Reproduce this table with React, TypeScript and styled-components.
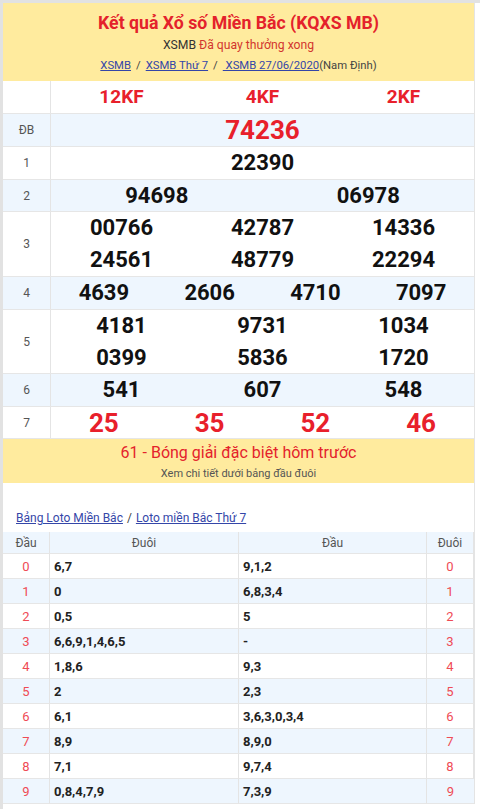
import React from "react";
import styled, { createGlobalStyle } from "styled-components";

const Global = createGlobalStyle`
  html, body { margin: 0; padding: 0; background: #fff; }
  body { font-family: Roboto, "Liberation Sans", Arial, sans-serif; color: #222; }
`;

const Frame = styled.div`
  width: 480px;
  box-sizing: border-box;
  border-top: 3px solid #e2e2e2;
  border-left: 3px solid #e2e2e2;
  padding-right: 5px;
  min-height: 809px;
`;

const Box = styled.div`
  border-right: 1px solid #e4e4e4;
  background: #fff;
`;

const Header = styled.div`
  background: #ffeb9e;
  height: 78px;
  display: flex;
  flex-direction: column;
  align-items: center;
  padding-top: 9px;
  box-sizing: border-box;
`;

const Title = styled.h1`
  margin: 0;
  font-size: 17.7px;
  line-height: 22px;
  font-weight: 700;
  color: #e4222b;
`;

const Sub = styled.div`
  margin-top: 2px;
  font-size: 12.2px;
  line-height: 18px;
  color: #333;
  span { color: #d2362e; }
`;

const Crumbs = styled.div`
  margin-top: 3px;
  font-size: 11.3px;
  line-height: 18px;
  color: #444;
  display: flex;
  gap: 5px;
  white-space: pre;
`;

const Link = styled.a`
  color: #3446a8;
  text-decoration: underline;
`;

const Row = styled.div<{ $alt?: boolean; $h: number }>`
  display: flex;
  height: ${(p) => p.$h}px;
  background: ${(p) => (p.$alt ? "#eef6fe" : "#fff")};
  border-bottom: 1px solid #e6e6e6;
  box-sizing: border-box;
`;

const Label = styled.div`
  width: 47px;
  flex: none;
  border-right: 1px solid #e4e4e4;
  display: flex;
  align-items: center;
  justify-content: center;
  font-size: 12px;
  color: #555;
`;

const Cells = styled.div<{ $cols: number }>`
  flex: 1;
  display: grid;
  grid-template-columns: repeat(${(p) => p.$cols}, 1fr);
  align-content: center;
`;

const Num = styled.div<{ $red?: boolean; $size?: number }>`
  text-align: center;
  font-weight: 700;
  font-size: ${(p) => p.$size ?? 22}px;
  line-height: 32px;
  color: ${(p) => (p.$red ? "#e8202b" : "#111")};
`;

const Footer = styled.div`
  background: #ffeb9e;
  height: 44px;
  display: flex;
  flex-direction: column;
  align-items: center;
  padding-top: 3px;
  box-sizing: border-box;
`;

const FootTitle = styled.div`
  font-size: 16px;
  line-height: 22px;
  color: #e4222b;
`;

const FootSub = styled.div`
  margin-top: 3px;
  font-size: 11px;
  line-height: 14px;
  color: #555;
`;

const LotoLinks = styled.div`
  padding: 25px 0 0 13px;
  height: 49px;
  box-sizing: border-box;
  font-size: 12px;
  line-height: 20px;
  color: #444;
  display: flex;
  gap: 4px;
`;

const LotoTable = styled.div`
  display: grid;
  grid-template-columns: 47px 189px 188px 1fr;
`;

const LCell = styled.div<{ $alt?: boolean; $head?: boolean; $kind: "num" | "val" }>`
  height: ${(p) => (p.$head ? 22 : 25)}px;
  box-sizing: border-box;
  background: ${(p) => (p.$alt ? "#eef6fe" : "#fff")};
  border-bottom: 1px solid #e6e6e6;
  border-right: 1px solid #e4e4e4;
  display: flex;
  align-items: center;
  justify-content: ${(p) => (p.$kind === "num" || p.$head ? "center" : "flex-start")};
  padding-left: ${(p) => (p.$kind === "val" && !p.$head ? "4px" : "0")};
  font-size: ${(p) => (p.$head ? 12 : 13)}px;
  font-weight: ${(p) => (p.$kind === "val" && !p.$head ? 700 : 400)};
  color: ${(p) => (p.$head ? "#555" : p.$kind === "num" ? "#ef4b55" : "#222")};
  &:last-child { border-right: none; }
`;

const results: { label: string; cols: number; nums: string[]; red?: boolean; size?: number; h: number }[] = [
  { label: "", cols: 3, nums: ["12KF", "4KF", "2KF"], red: true, size: 19, h: 33 },
  { label: "ĐB", cols: 1, nums: ["74236"], red: true, size: 26, h: 33 },
  { label: "1", cols: 1, nums: ["22390"], h: 33 },
  { label: "2", cols: 2, nums: ["94698", "06978"], h: 32 },
  { label: "3", cols: 3, nums: ["00766", "42787", "14336", "24561", "48779", "22294"], h: 65 },
  { label: "4", cols: 4, nums: ["4639", "2606", "4710", "7097"], h: 33 },
  { label: "5", cols: 3, nums: ["4181", "9731", "1034", "0399", "5836", "1720"], h: 64 },
  { label: "6", cols: 3, nums: ["541", "607", "548"], h: 33 },
  { label: "7", cols: 4, nums: ["25", "35", "52", "46"], red: true, size: 26, h: 32 },
];

const loto: [string, string][] = [
  ["6,7", "9,1,2"],
  ["0", "6,8,3,4"],
  ["0,5", "5"],
  ["6,6,9,1,4,6,5", "-"],
  ["1,8,6", "9,3"],
  ["2", "2,3"],
  ["6,1", "3,6,3,0,3,4"],
  ["8,9", "8,9,0"],
  ["7,1", "9,7,4"],
  ["0,8,4,7,9", "7,3,9"],
];

export default function App() {
  return (
    <>
      <Global />
      <Frame>
        <Box>
          <Header>
            <Title>Kết quả Xổ số Miền Bắc (KQXS MB)</Title>
            <Sub>
              XSMB <span>Đã quay thưởng xong</span>
            </Sub>
            <Crumbs>
              <Link>XSMB</Link>/<Link>XSMB Thứ 7</Link>/
              <span>
                <Link> XSMB 27/06/2020</Link>(Nam Định)
              </span>
            </Crumbs>
          </Header>
          {results.map((r, i) => (
            <Row key={i} $alt={i % 2 === 1} $h={r.h}>
              <Label>{r.label}</Label>
              <Cells $cols={r.cols}>
                {r.nums.map((n, j) => (
                  <Num key={j} $red={r.red} $size={r.size}>
                    {n}
                  </Num>
                ))}
              </Cells>
            </Row>
          ))}
          <Footer>
            <FootTitle>61 - Bóng giải đặc biệt hôm trước</FootTitle>
            <FootSub>Xem chi tiết dưới bảng đầu đuôi</FootSub>
          </Footer>
          <LotoLinks>
            <Link>Bảng Loto Miền Bắc</Link>/<Link>Loto miền Bắc Thứ 7</Link>
          </LotoLinks>
          <LotoTable>
            <LCell $head $alt $kind="num">Đầu</LCell>
            <LCell $head $alt $kind="val">Đuôi</LCell>
            <LCell $head $alt $kind="val">Đầu</LCell>
            <LCell $head $alt $kind="num">Đuôi</LCell>
            {loto.map(([a, b], i) => (
              <React.Fragment key={i}>
                <LCell $alt={i % 2 === 1} $kind="num">{i}</LCell>
                <LCell $alt={i % 2 === 1} $kind="val">{a}</LCell>
                <LCell $alt={i % 2 === 1} $kind="val">{b}</LCell>
                <LCell $alt={i % 2 === 1} $kind="num">{i}</LCell>
              </React.Fragment>
            ))}
          </LotoTable>
        </Box>
      </Frame>
    </>
  );
}
